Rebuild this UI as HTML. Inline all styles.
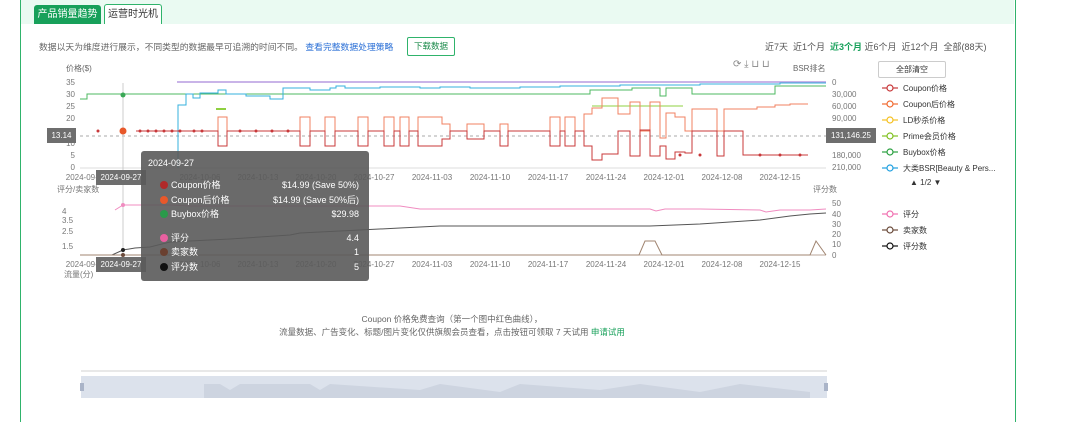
<!DOCTYPE html>
<html><head><meta charset="utf-8"><style>
body{margin:0;width:1080px;height:422px;overflow:hidden;background:#fff;font-family:"Liberation Sans","Noto Sans CJK SC",sans-serif;position:relative}
.abs{position:absolute;white-space:nowrap}
.frame{position:absolute;left:20px;top:0;width:994px;height:422px;border-left:1.5px solid #2fb36b;border-right:1.5px solid #2fb36b}
.band{position:absolute;left:21px;top:0;width:993px;height:24px;background:#eafaf2}
.t{font-size:9px;color:#666}
.tt div{line-height:12px}
</style></head><body>
<div class="band"></div>
<div class="frame"></div>
<div class="abs" style="left:34px;top:5px;width:67px;height:19px;background:#17a05a;border-radius:3px 3px 0 0;color:#fff;font-size:10px;line-height:19px;text-align:center">产品销量趋势</div>
<div class="abs" style="left:104px;top:4px;width:56px;height:19px;background:#fff;border:1px solid #2fb36b;border-bottom:none;border-radius:3px 3px 0 0;color:#333;font-size:10px;line-height:19px;text-align:center">运营时光机</div>
<div class="abs t" style="left:39px;top:40px;font-size:8.8px">数据以天为维度进行展示，不同类型的数据最早可追溯的时间不同。 <span style="color:#2a6fd6">查看完整数据处理策略</span></div>
<div class="abs" style="left:407px;top:37px;width:46px;height:17px;border:1px solid #2fb36b;border-radius:2px;font-size:8.5px;line-height:17px;text-align:center;color:#1a8a4a">下载数据</div>
<div class="abs t" style="left:765px;top:40px;color:#555">近7天 &nbsp;近1个月 &nbsp;<b style="color:#17a05a">近3个月</b> 近6个月 &nbsp;近12个月 &nbsp;全部(88天)</div>
<div class="abs t" style="left:66px;top:63px;font-size:8px">价格($)</div>
<div class="abs t" style="left:793px;top:63px;font-size:8px">BSR排名</div>
<div class="abs t" style="left:733px;top:59px;font-size:10px;color:#888">⟳ ⤓ ⊔ ⊔</div>
<div class="abs" style="left:878px;top:61px;width:66px;height:15px;border:1px solid #ccc;border-radius:2px;font-size:8px;line-height:15px;text-align:center;color:#333">全部清空</div>
<svg class="abs" style="left:0;top:0" width="1080" height="422">
<g font-size="8" fill="#777" font-family="Liberation Sans,sans-serif">
<text x="75" y="85" text-anchor="end">35</text><text x="75" y="97" text-anchor="end">30</text><text x="75" y="109" text-anchor="end">25</text><text x="75" y="121" text-anchor="end">20</text><text x="75" y="146" text-anchor="end">10</text><text x="75" y="158" text-anchor="end">5</text><text x="75" y="170" text-anchor="end">0</text>
<text x="832" y="85">0</text><text x="832" y="97">30,000</text><text x="832" y="109">60,000</text><text x="832" y="121">90,000</text><text x="832" y="158">180,000</text><text x="832" y="170">210,000</text>
<g text-anchor="middle"><text x="84" y="180">2024-09-2</text><text x="200" y="180">2024-10-06</text><text x="258" y="180">2024-10-13</text><text x="316" y="180">2024-10-20</text><text x="374" y="180">2024-10-27</text><text x="432" y="180">2024-11-03</text><text x="490" y="180">2024-11-10</text><text x="548" y="180">2024-11-17</text><text x="606" y="180">2024-11-24</text><text x="664" y="180">2024-12-01</text><text x="722" y="180">2024-12-08</text><text x="780" y="180">2024-12-15</text>
<text x="84" y="267">2024-09-2</text><text x="200" y="267">2024-10-06</text><text x="258" y="267">2024-10-13</text><text x="316" y="267">2024-10-20</text><text x="374" y="267">2024-10-27</text><text x="432" y="267">2024-11-03</text><text x="490" y="267">2024-11-10</text><text x="548" y="267">2024-11-17</text><text x="606" y="267">2024-11-24</text><text x="664" y="267">2024-12-01</text><text x="722" y="267">2024-12-08</text><text x="780" y="267">2024-12-15</text></g>
<text x="57" y="192">评分/卖家数</text><text x="813" y="192">评分数</text><text x="64" y="277">流量(分)</text>
<text x="62" y="214">4</text><text x="62" y="223">3.5</text><text x="62" y="234">2.5</text><text x="62" y="249">1.5</text>
<text x="832" y="206">50</text><text x="832" y="217">40</text><text x="832" y="227">30</text><text x="832" y="237">20</text><text x="832" y="247">10</text><text x="832" y="258">0</text>
</g>
<line x1="80" y1="168" x2="826" y2="168" stroke="#ddd"/>
<line x1="80" y1="255" x2="826" y2="255" stroke="#b8a69a"/>
<line x1="80" y1="136" x2="826" y2="136" stroke="#aaa" stroke-dasharray="3,3"/>
<line x1="123" y1="83" x2="123" y2="255" stroke="#ccc"/>
<line x1="177" y1="82" x2="826" y2="82" stroke="#b79be0" stroke-width="1.5"/>
<polyline fill="none" stroke="#4cb860" points="80,99 87,99 87,94 590,94 590,90 632,90 632,88 660,88 660,96 666,96 666,88 692,88 692,94 775,94 775,86 826,86"/>
<polyline fill="none" stroke="#35b0de" points="178,168 178,105 186,105 186,94 193,94 193,98 200,98 200,93 218,93 218,90 226,90 226,94 246,94 246,96 270,96 270,99 283,99 283,88 310,88 310,90 330,90 330,88 336,88 336,86 345,86 345,88 380,88 380,87 420,87 420,88 440,88 440,87 470,87 470,88 520,88 520,87 560,87 560,86 620,86 620,85 700,85 700,84 780,84 780,83 826,83"/>
<line x1="216" y1="109" x2="226" y2="109" stroke="#8fd040" stroke-width="2"/>
<polyline fill="none" stroke="#8fd040" points="592,106 683,106"/>
<polyline fill="none" stroke="#f08060" stroke-width="1" points="136,131 218,131 218,117 227,117 227,131 300,131 300,117 310,117 310,131 325,131 325,117 335,117 335,131 358,131 358,117 368,117 368,131 384,131 384,117 394,117 394,131 400,131 400,117 409,117 409,131 418,131 418,117 442,117 442,124 450,124 450,131 467,131 467,124 484,124 484,131 500,131 500,124 508,124 508,131 550,131 550,117 560,117 560,131 565,131 565,117 575,117 575,131 584,131 584,114 592,114 592,108 602,108 602,98 618,98 618,114 630,114 630,102 640,102 640,131 650,131 650,102 660,102 660,138 666,138 666,113 675,113 675,117 685,117 685,131 692,131 692,109 717,109 717,131 724,131 724,109 743,109 743,109 757,109 757,107 775,107 775,105 790,105 790,104 808,104"/>
<polyline fill="none" stroke="#c8383a" stroke-width="1" points="136,131 218,131 218,146 227,146 227,131 300,131 300,146 310,146 310,131 325,131 325,146 335,146 335,131 358,131 358,146 368,146 368,131 384,131 384,146 394,146 394,131 400,131 400,146 409,146 409,131 418,131 418,146 442,146 442,139 450,139 450,131 467,131 467,139 484,139 484,131 500,131 500,146 508,146 508,131 550,131 550,146 560,146 560,131 565,131 565,146 575,146 575,131 584,131 584,146 592,146 592,160 602,160 602,154 618,154 618,131 630,131 630,156 640,156 640,130 650,130 650,156 660,156 660,146 666,146 666,159 675,159 675,152 685,152 685,153 692,153 692,131 717,131 717,156 724,156 724,131 743,131 743,155 808,155"/>
<g fill="#c8383a"><circle cx="98" cy="131" r="1.5"/><circle cx="140" cy="131" r="1.5"/><circle cx="148" cy="131" r="1.5"/><circle cx="156" cy="131" r="1.5"/><circle cx="164" cy="131" r="1.5"/><circle cx="172" cy="131" r="1.5"/><circle cx="180" cy="131" r="1.5"/><circle cx="194" cy="131" r="1.5"/><circle cx="202" cy="131" r="1.5"/><circle cx="240" cy="131" r="1.5"/><circle cx="256" cy="131" r="1.5"/><circle cx="272" cy="131" r="1.5"/><circle cx="288" cy="131" r="1.5"/><circle cx="680" cy="155" r="1.5"/><circle cx="700" cy="155" r="1.5"/><circle cx="760" cy="155" r="1.5"/><circle cx="780" cy="155" r="1.5"/><circle cx="800" cy="155" r="1.5"/></g>
<circle cx="123" cy="131" r="3.5" fill="#e8582a"/><circle cx="123" cy="95" r="2.5" fill="#3aa856"/>
<polyline fill="none" stroke="#f08cc0" points="115,210 123,205 170,205 190,206 300,206 400,206 420,209 540,209 650,209 656,211 665,209 700,209 760,210 766,212 780,210 810,210 826,209"/>
<polyline fill="none" stroke="#555" points="112,255 123,250 135,248 150,247 170,242 230,239 290,235 300,233 400,228 440,226 500,226 650,226 700,224 760,220 790,216 810,214 826,213"/>
<polyline fill="none" stroke="#a08470" points="80,255 639,255 645,241 655,241 662,255 810,255 816,241 826,255"/>
<circle cx="123" cy="205" r="2" fill="#f08cc0"/><circle cx="123" cy="250" r="2" fill="#222"/><circle cx="123" cy="255" r="2" fill="#6a4a3a"/>
<rect x="81" y="376" width="746" height="22" fill="#dce2ec"/>
<polygon points="204,398 204,384 220,384 230,390 240,384 310,384 320,390 330,384 420,390 440,384 500,392 520,384 600,390 640,384 700,392 740,384 810,392 810,398" fill="#cdd4e0"/>
<line x1="81" y1="371" x2="827" y2="371" stroke="#e8e8e8" stroke-width="2"/>
<rect x="80" y="383" width="4" height="8" fill="#aab4c8"/><rect x="824" y="383" width="4" height="8" fill="#aab4c8"/>
<g font-size="8" fill="#333">
<g fill="none" stroke-width="1.2"><g stroke="#c8383a"><line x1="882" y1="88" x2="898" y2="88"/><circle cx="890" cy="88" r="3" fill="#fff"/></g>
<g stroke="#f06a30"><line x1="882" y1="104" x2="898" y2="104"/><circle cx="890" cy="104" r="3" fill="#fff"/></g>
<g stroke="#f5c020"><line x1="882" y1="120" x2="898" y2="120"/><circle cx="890" cy="120" r="3" fill="#fff"/></g>
<g stroke="#80c020"><line x1="882" y1="136" x2="898" y2="136"/><circle cx="890" cy="136" r="3" fill="#fff"/></g>
<g stroke="#2aa040"><line x1="882" y1="152" x2="898" y2="152"/><circle cx="890" cy="152" r="3" fill="#fff"/></g>
<g stroke="#20a0e0"><line x1="882" y1="168" x2="898" y2="168"/><circle cx="890" cy="168" r="3" fill="#fff"/></g>
<g stroke="#f070b0"><line x1="882" y1="214" x2="898" y2="214"/><circle cx="890" cy="214" r="3" fill="#fff"/></g>
<g stroke="#6a4a3a"><line x1="882" y1="230" x2="898" y2="230"/><circle cx="890" cy="230" r="3" fill="#fff"/></g>
<g stroke="#111"><line x1="882" y1="246" x2="898" y2="246"/><circle cx="890" cy="246" r="3" fill="#fff"/></g></g>
<text x="903" y="91">Coupon价格</text><text x="903" y="107">Coupon后价格</text><text x="903" y="123">LD秒杀价格</text><text x="903" y="139">Prime会员价格</text><text x="903" y="155">Buybox价格</text><text x="903" y="171">大类BSR[Beauty &amp; Pers...</text>
<text x="910" y="185">▲ 1/2 ▼</text>
<text x="903" y="217">评分</text><text x="903" y="233">卖家数</text><text x="903" y="249">评分数</text>
</g>
</svg>
<div class="abs" style="left:47px;top:128px;width:29px;height:15px;background:#6e6e6e;color:#fff;font-size:8px;line-height:15px;text-align:center">13.14</div>
<div class="abs" style="left:826px;top:128px;width:50px;height:15px;background:#6e6e6e;color:#fff;font-size:8px;line-height:15px;text-align:center">131,146.25</div>
<div class="abs" style="left:96px;top:170px;width:50px;height:15px;background:#6e6e6e;color:#fff;font-size:8px;line-height:15px;text-align:center">2024-09-27</div>
<div class="abs" style="left:96px;top:257px;width:50px;height:15px;background:#6e6e6e;color:#fff;font-size:8px;line-height:15px;text-align:center">2024-09-27</div>
<div class="abs tt" style="left:141px;top:151px;width:228px;height:130px;background:rgba(90,90,90,0.9);border-radius:3px;color:#fff;font-size:9px">
<div class="abs" style="left:7px;top:6px">2024-09-27</div>
<div class="abs" style="left:30px;top:28px">Coupon价格</div><div class="abs" style="right:10px;top:28px">$14.99 (Save 50%)</div>
<div class="abs" style="left:30px;top:43px">Coupon后价格</div><div class="abs" style="right:10px;top:43px">$14.99 (Save 50%后)</div>
<div class="abs" style="left:30px;top:57px">Buybox价格</div><div class="abs" style="right:10px;top:57px">$29.98</div>
<div class="abs" style="left:30px;top:81px">评分</div><div class="abs" style="right:10px;top:81px">4.4</div>
<div class="abs" style="left:30px;top:95px">卖家数</div><div class="abs" style="right:10px;top:95px">1</div>
<div class="abs" style="left:30px;top:110px">评分数</div><div class="abs" style="right:10px;top:110px">5</div>
<svg class="abs" style="left:0;top:0" width="30" height="130"><circle cx="23" cy="34" r="4" fill="#b02a2a"/><circle cx="23" cy="49" r="4" fill="#e8582a"/><circle cx="23" cy="63" r="4" fill="#2a9a4a"/><circle cx="23" cy="87" r="4" fill="#e860a0"/><circle cx="23" cy="101" r="4" fill="#6a4030"/><circle cx="23" cy="116" r="4" fill="#111"/></svg>
</div>
<div class="abs t" style="left:0;width:904px;text-align:center;top:313px;font-size:8.5px">Coupon 价格免费查询（第一个图中红色曲线），</div>
<div class="abs t" style="left:0;width:904px;text-align:center;top:326px;font-size:8.5px">流量数据、广告变化、标题/图片变化仅供旗舰会员查看，点击按钮可领取 7 天试用 <span style="color:#17a05a">申请试用</span></div>
</body></html>
